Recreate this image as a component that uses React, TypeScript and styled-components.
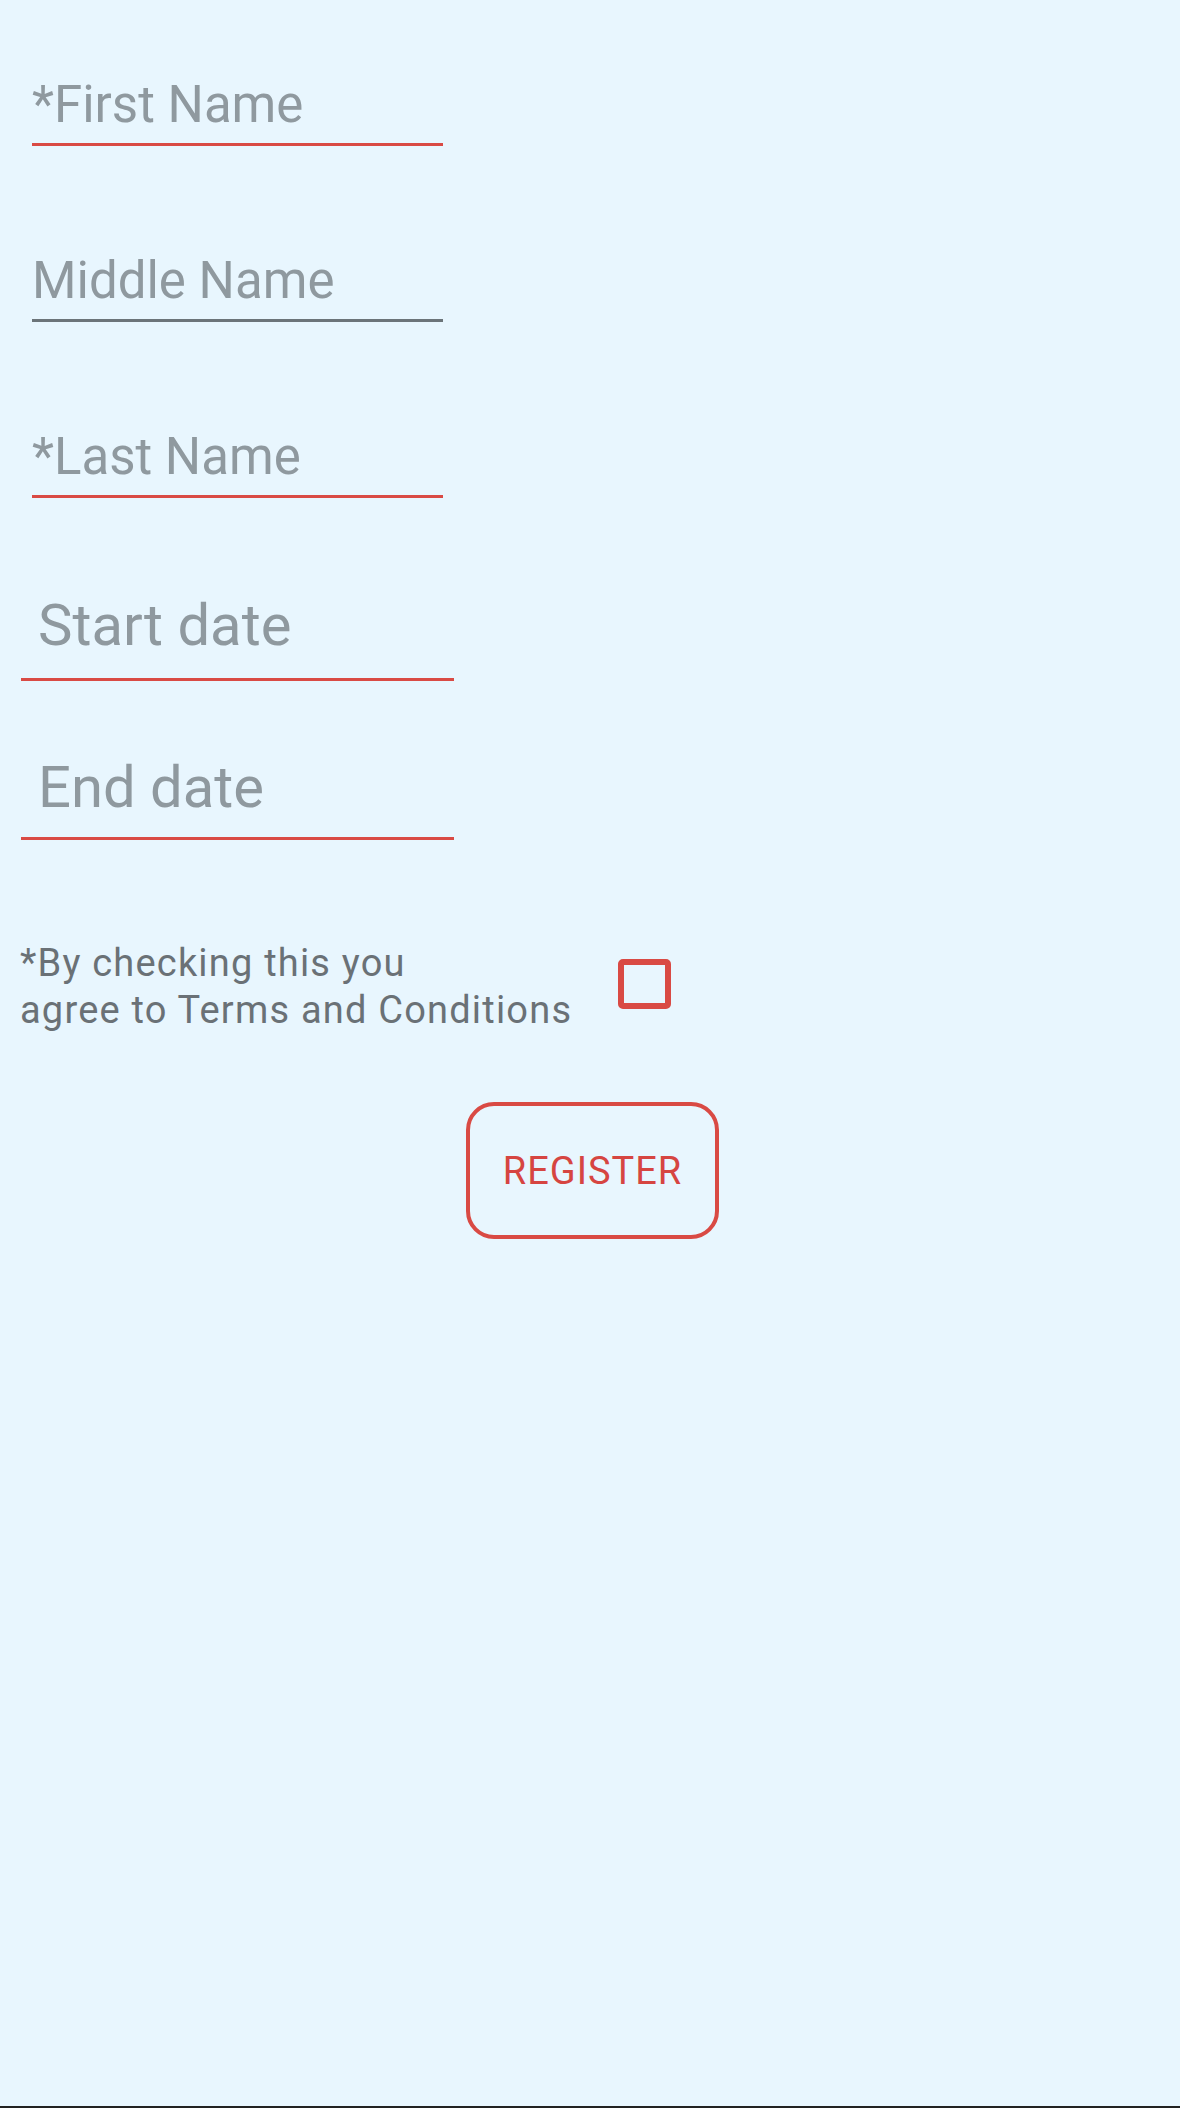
import React from "react";
import styled, { createGlobalStyle } from "styled-components";

const GlobalStyle = createGlobalStyle`
  html, body {
    margin: 0;
    padding: 0;
    background: #e8f6fe;
  }
  body {
    font-family: Roboto, "Liberation Sans", sans-serif;
  }
  * { box-sizing: border-box; }
`;

const Screen = styled.div`
  min-height: 2108px;
  background: #e8f6fe;
  border-bottom: 2px solid #222222;
  display: flex;
  flex-direction: column;
  padding-top: 75px;
`;

const NameField = styled.div<{ $required?: boolean; $first?: boolean }>`
  width: 411px;
  margin-left: 32px;
  margin-top: ${(p) => (p.$first ? "0" : "105px")};
  padding-bottom: 8px;
  font-size: 51px;
  line-height: 60px;
  color: #8f999f;
  border-bottom: 3px solid ${(p) => (p.$required ? "#d94a44" : "#6b7479")};
  white-space: nowrap;
`;

const DateField = styled.div<{ $gap: number; $pad: number }>`
  width: 433px;
  margin-left: 21px;
  margin-top: ${(p) => p.$gap}px;
  padding: 0 0 ${(p) => p.$pad}px 17px;
  font-size: 58px;
  line-height: 68px;
  color: #8f999f;
  border-bottom: 3px solid #d94a44;
  white-space: nowrap;
`;

const TermsRow = styled.div`
  display: flex;
  align-items: center;
  margin-top: 100px;
  padding-left: 20px;
`;

const TermsLabel = styled.div`
  width: 598px;
  font-size: 38px;
  letter-spacing: 1.2px;
  line-height: 47px;
  color: #6a7176;
  white-space: nowrap;
`;

const CheckBox = styled.div`
  width: 53px;
  height: 50px;
  border: 6px solid #d94a44;
  border-radius: 5px;
  margin-top: -6px;
`;

const ButtonRow = styled.div`
  display: flex;
  justify-content: center;
  padding-left: 5px;
  margin-top: 68px;
`;

const RegisterButton = styled.button`
  width: 253px;
  height: 137px;
  background: transparent;
  border: 4px solid #d94a44;
  border-radius: 28px;
  color: #d64541;
  font-family: Roboto, "Liberation Sans", sans-serif;
  font-size: 38px;
  letter-spacing: 1px;
  text-transform: uppercase;
  padding: 0;
  cursor: pointer;
`;

export default function App() {
  return (
    <>
      <GlobalStyle />
      <Screen>
        <NameField $first $required>*First Name</NameField>
        <NameField>Middle Name</NameField>
        <NameField $required>*Last Name</NameField>
        <DateField $gap={93} $pad={19}>Start date</DateField>
        <DateField $gap={72} $pad={16}>End date</DateField>
        <TermsRow>
          <TermsLabel>
            *By checking this you
            <br />
            agree to Terms and Conditions
          </TermsLabel>
          <CheckBox role="checkbox" aria-checked="false" />
        </TermsRow>
        <ButtonRow>
          <RegisterButton>Register</RegisterButton>
        </ButtonRow>
      </Screen>
    </>
  );
}
